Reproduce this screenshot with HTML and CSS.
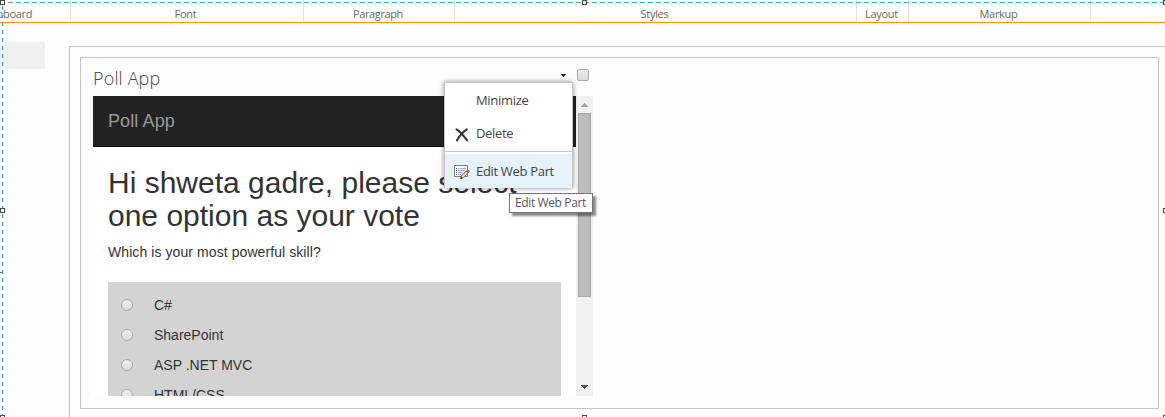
FILE: index.html
```
<!DOCTYPE html>
<html lang="en">
<head>
<meta charset="utf-8">
<title>Poll App</title>
<link rel="stylesheet" href="styles.css">
</head>
<body>
<header class="ribbon">
  <div class="group clipboard"><span>Clipboard</span></div>
  <div class="group font"><span>Font</span></div>
  <div class="group paragraph"><span>Paragraph</span></div>
  <div class="group styles"><span>Styles</span></div>
  <div class="group layout"><span>Layout</span></div>
  <div class="group markup"><span>Markup</span></div>
</header>
<div class="workspace">
  <aside class="sidebar"></aside>
  <main class="zone">
    <section class="editor">
      <div class="webpart">
        <div class="title-row">
          <h2>Poll App</h2>
          <svg class="caret" width="5" height="3" viewBox="0 0 5 3" shape-rendering="crispEdges"><path d="M0 0h5v1h-1v1h-1v1h-1v-1h-1v-1h-1z" fill="#003759"/></svg>
          <span class="check"></span>
        </div>
        <div class="frame">
          <div class="app">
            <nav class="navbar"><span>Poll App</span></nav>
            <div class="content">
              <h1>Hi shweta gadre, please select<br>one option as your vote</h1>
              <p>Which is your most powerful skill?</p>
              <ul class="options">
                <li><i class="radio"></i>C#</li>
                <li><i class="radio"></i>SharePoint</li>
                <li><i class="radio"></i>ASP .NET MVC</li>
                <li><i class="radio"></i>HTML/CSS</li>
              </ul>
            </div>
          </div>
          <div class="scrollbar">
            <svg class="arrow" width="17" height="17" shape-rendering="crispEdges"><path d="M5 11h7v-1h-1v-1h-1v-1h-1v-1h-1v1h-1v1h-1v1h-1z" fill="#a3a3a3"/></svg>
            <div class="thumb"></div>
            <svg class="arrow" width="17" height="17" shape-rendering="crispEdges"><path d="M5 6h7v1h-1v1h-1v1h-1v1h-1v-1h-1v-1h-1v-1h-1z" fill="#505050"/></svg>
          </div>
        </div>
      </div>
    </section>
  </main>
</div>
<div class="menu">
  <div class="item"><span>Minimize</span></div>
  <div class="item">
    <svg width="16" height="16" viewBox="0 0 16 16"><path d="M2.5 3.3C7 6 9 9 13 14.3M12.8 3.3C8 6.5 6 9 3 14.3" fill="none" stroke="#333" stroke-width="2.1" stroke-linecap="round"/></svg>
    <span>Delete</span>
  </div>
  <div class="rule"></div>
  <div class="item active">
    <svg width="16" height="16" viewBox="0 0 16 16"><path d="M.5 2.5h13v11H.5z" fill="#fff" stroke="#6b7fa3"/><path d="M2 5.5h1M2 7.5h1M2 9.5h1M2 11.5h1" stroke="#44597f"/><path d="M4 5.5h8M4 7.5h7M4 9.5h5M4 11.5h3" stroke="#9fb3d6"/><path d="M7.2 13l5-5 2 2-5 5-2.5.7z" fill="#f1d18b" stroke="#73572e" stroke-width=".8"/><path d="M12 8l1.5-1.8 2.3 2-1.6 2z" fill="#ca5145"/><path d="M6.4 16l.6-2.4 1.9 1.5z" fill="#333"/></svg>
    <span>Edit Web Part</span>
  </div>
</div>
<div class="tooltip"><span>Edit Web Part</span></div>
<svg class="selection" width="1165" height="417" shape-rendering="crispEdges">
  <path d="M0 2.5H1165" stroke-dasharray="5 3" stroke-dashoffset="0"/>
  <path d="M2.5 0V417" stroke-dasharray="4 4" stroke-dashoffset="2"/>
  <g class="handles">
    <path d="M.5 .5h4v4h-4zM582.5 .5h4v4h-4zM1163.5 .5h4v4h-4zM.5 208.5h4v4h-4zM1163.5 208.5h4v4h-4zM.5 415.5h4v4h-4zM582.5 415.5h4v4h-4zM1163.5 415.5h4v4h-4z"/>
  </g>
  <path d="M0 272.5h2" class="tick"/>
</svg>
</body>
</html>
```
FILE: styles.css
```
* { box-sizing: border-box; }
html { overflow: hidden; }
body {
  margin: 0;
  width: 1165px;
  height: 417px;
  overflow: hidden;
  background: #fdfdfd;
  font-family: "Open Sans", sans-serif;
  color: #444;
}
h1, h2, p, ul { margin: 0; padding: 0; font-weight: normal; }
.ribbon {
  display: flex;
  height: 23px;
  background: #fff;
  border-bottom: 1px solid #f90;
  font-size: 11px;
  line-height: 15px;
  color: #666;
}
.group {
  display: flex;
  flex: none;
  justify-content: center;
  padding: 6px 2px 0 0;
  border-right: 1px solid #e1e1e1;
  letter-spacing: -.3px;
}
.clipboard { width: 71px; justify-content: flex-start; }
.clipboard span { margin-left: -15px; }
.font { width: 233px; padding-right: 3px; }
.paragraph { width: 151px; padding-right: 2px; letter-spacing: -.4px; }
.styles { width: 402px; }
.layout { width: 52px; }
.markup { width: 182px; }
.workspace { display: flex; height: 394px; overflow: hidden; }
.sidebar { flex: none; width: 45px; height: 27px; margin-top: 19px; background: #f0f0f0; }
.zone {
  flex: none;
  width: 1110px;
  height: 400px;
  margin: 23px 0 0 24px;
  padding: 10px;
  border: 1px solid #c6c6c6;
}
.editor {
  width: 1079px;
  height: 352px;
  padding: 0 12px;
  border: 1px solid #c6c6c6;
}
.title-row { display: flex; height: 38px; width: 500px; }
h2 {
  flex: 1;
  padding-top: 8px;
  font-size: 18px;
  line-height: 25px;
  font-weight: 300;
  letter-spacing: .15px;
}
.caret { margin: 16px 11px 0 0; }
.check {
  width: 12px;
  height: 12px;
  margin: 11px 4px 0 0;
  border: 1px solid #aaa;
  border-radius: 2px;
  background: linear-gradient(#eee, #dcdcdc);
}
.frame { display: flex; width: 500px; height: 300px; }
.app {
  flex: 1;
  overflow: hidden;
  background: #fff;
  font-family: "Liberation Sans", Arial, sans-serif;
  font-size: 14px;
  line-height: 20px;
  color: #333;
}
.navbar {
  height: 51px;
  padding: 15px;
  border-bottom: 1px solid #080808;
  background: #222;
  color: #999;
  font-size: 18px;
  letter-spacing: .1px;
}
.content { padding: 19px 15px 0; }
h1 { font-size: 30px; line-height: 33px; margin-bottom: 10px; white-space: nowrap; }
p { letter-spacing: .08px; }
.options {
  margin-top: 20px;
  padding: 8px 13px;
  background: #d3d3d3;
  list-style: none;
}
.options li { display: flex; align-items: center; height: 30px; }
.radio {
  width: 12px;
  height: 12px;
  margin-right: 21px;
  border: 1px solid #aaa;
  border-radius: 50%;
  background: linear-gradient(#efefef, #dcdcdc);
}
.scrollbar { display: flex; flex-direction: column; width: 17px; background: #f1f1f1; }
.arrow { display: block; flex: none; }
.thumb {
  height: 184px;
  margin: 0 2px 82px 2px;
  border: 1px solid #a8a8a8;
  background: #bcbcbc;
}
.menu {
  position: absolute;
  left: 444px;
  top: 82px;
  width: 129px;
  height: 106px;
  padding-top: 2px;
  border: 1px solid #c6c6c6;
  background: #fff;
  box-shadow: 0 0 5px rgba(0, 0, 0, .45);
  font-size: 13px;
  letter-spacing: -.32px;
}
.item { display: flex; align-items: center; height: 33px; }
.item span { margin: -4px 0 0 auto; width: 96px; white-space: nowrap; }
.item svg { flex: none; margin: -2px 0 0 9px; }
.rule { height: 1px; background: #c6c6c6; }
.active { height: 34px; margin-top: 2px; background: #e5f2fa; }
.active span, .active svg { margin-top: 0; }
.tooltip {
  position: absolute;
  left: 509px;
  top: 193px;
  width: 84px;
  height: 20px;
  padding-left: 5px;
  border: 1px solid #767676;
  background: #fff;
  box-shadow: 3px 3px 2px rgba(0, 0, 0, .45);
  font-size: 12px;
  line-height: 18px;
  letter-spacing: -.38px;
  white-space: nowrap;
  color: #575757;
}
.selection { position: absolute; left: 0; top: 0; fill: none; stroke: #3399ff; }
.handles { fill: #fff; stroke: #484848; }
.tick { stroke: #666; }
```
